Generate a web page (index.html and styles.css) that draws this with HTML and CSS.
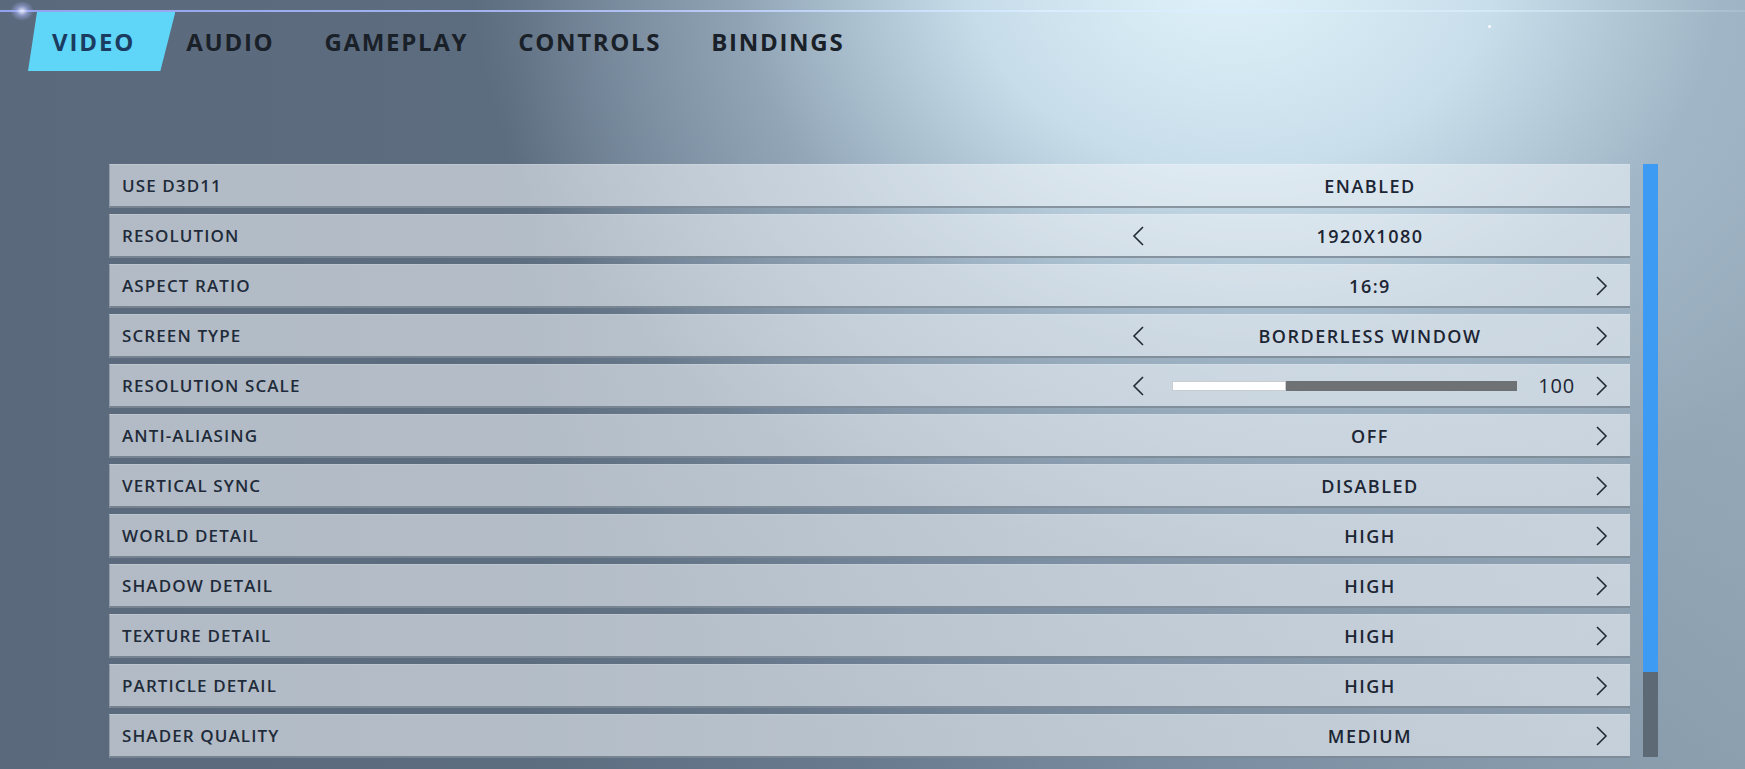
FILE: index.html
```html
<!DOCTYPE html>
<html lang="en">
<head>
<meta charset="utf-8">
<title>Video Settings</title>
<link rel="stylesheet" href="styles.css">
</head>
<body>
<div class="screen">
  <div class="glow-line"><span class="star"></span><span class="dot"></span></div>
  <nav class="tabs">
    <div class="tab active">VIDEO</div>
    <div class="tab">AUDIO</div>
    <div class="tab">GAMEPLAY</div>
    <div class="tab">CONTROLS</div>
    <div class="tab">BINDINGS</div>
  </nav>

  <div class="panel">
    <div class="rows">
      <div class="row"><div class="label">USE D3D11</div><div class="value"><span class="arrow"></span><span class="val">ENABLED</span><span class="arrow"></span></div></div>
      <div class="row"><div class="label">RESOLUTION</div><div class="value"><span class="arrow"><svg viewBox="0 0 12 20"><path d="M11 1 L2 10 L11 19"/></svg></span><span class="val">1920X1080</span><span class="arrow"></span></div></div>
      <div class="row"><div class="label">ASPECT RATIO</div><div class="value"><span class="arrow"></span><span class="val">16:9</span><span class="arrow"><svg viewBox="0 0 12 20"><path d="M1 1 L10 10 L1 19"/></svg></span></div></div>
      <div class="row"><div class="label">SCREEN TYPE</div><div class="value"><span class="arrow"><svg viewBox="0 0 12 20"><path d="M11 1 L2 10 L11 19"/></svg></span><span class="val">BORDERLESS WINDOW</span><span class="arrow"><svg viewBox="0 0 12 20"><path d="M1 1 L10 10 L1 19"/></svg></span></div></div>
      <div class="row"><div class="label">RESOLUTION SCALE</div><div class="value"><span class="arrow"><svg viewBox="0 0 12 20"><path d="M11 1 L2 10 L11 19"/></svg></span><span class="slider-wrap"><span class="slider"><span class="fill" style="width:33%"></span></span><span class="num">100</span></span><span class="arrow"><svg viewBox="0 0 12 20"><path d="M1 1 L10 10 L1 19"/></svg></span></div></div>
      <div class="row"><div class="label">ANTI-ALIASING</div><div class="value"><span class="arrow"></span><span class="val">OFF</span><span class="arrow"><svg viewBox="0 0 12 20"><path d="M1 1 L10 10 L1 19"/></svg></span></div></div>
      <div class="row"><div class="label">VERTICAL SYNC</div><div class="value"><span class="arrow"></span><span class="val">DISABLED</span><span class="arrow"><svg viewBox="0 0 12 20"><path d="M1 1 L10 10 L1 19"/></svg></span></div></div>
      <div class="row"><div class="label">WORLD DETAIL</div><div class="value"><span class="arrow"></span><span class="val">HIGH</span><span class="arrow"><svg viewBox="0 0 12 20"><path d="M1 1 L10 10 L1 19"/></svg></span></div></div>
      <div class="row"><div class="label">SHADOW DETAIL</div><div class="value"><span class="arrow"></span><span class="val">HIGH</span><span class="arrow"><svg viewBox="0 0 12 20"><path d="M1 1 L10 10 L1 19"/></svg></span></div></div>
      <div class="row"><div class="label">TEXTURE DETAIL</div><div class="value"><span class="arrow"></span><span class="val">HIGH</span><span class="arrow"><svg viewBox="0 0 12 20"><path d="M1 1 L10 10 L1 19"/></svg></span></div></div>
      <div class="row"><div class="label">PARTICLE DETAIL</div><div class="value"><span class="arrow"></span><span class="val">HIGH</span><span class="arrow"><svg viewBox="0 0 12 20"><path d="M1 1 L10 10 L1 19"/></svg></span></div></div>
      <div class="row"><div class="label">SHADER QUALITY</div><div class="value"><span class="arrow"></span><span class="val">MEDIUM</span><span class="arrow"><svg viewBox="0 0 12 20"><path d="M1 1 L10 10 L1 19"/></svg></span></div></div>
    </div>
    <div class="scrollbar"><div class="thumb"></div></div>
  </div>
</div>
</body>
</html>
```

FILE: styles.css
```css
html, body {
  margin: 0;
  padding: 0;
  width: 1745px;
  height: 769px;
  overflow: hidden;
}

body {
  font-family: "Open Sans", "Liberation Sans", sans-serif;
  color: #1d2735;
  background:
    radial-gradient(ellipse 760px 600px at 1230px -40px, rgba(226,244,252,1) 0%, rgba(206,228,240,0.9) 35%, rgba(170,192,208,0.55) 65%, rgba(140,160,178,0) 100%),
    radial-gradient(ellipse 900px 700px at 1400px 200px, rgba(170,192,208,0.6) 0%, rgba(150,170,186,0) 100%),
    linear-gradient(90deg, #5a697b 0%, #5d6d80 30%, #708296 60%, #8a9dad 100%);
}

.screen {
  width: 1745px;
  height: 769px;
  display: flex;
  flex-direction: column;
}

.glow-line {
  position: relative;
  margin-top: 10px;
  height: 2px;
  background: linear-gradient(90deg, rgba(150,165,245,0.95) 0%, rgba(170,185,245,0.95) 30%, rgba(215,238,255,0.95) 60%, rgba(220,240,255,0.6) 85%, rgba(220,240,255,0.15) 100%);
}

.glow-line .star {
  position: absolute;
  left: 10px;
  top: -9px;
  width: 24px;
  height: 20px;
  background: radial-gradient(ellipse at center, rgba(235,240,255,0.95) 0%, rgba(170,180,250,0.5) 35%, rgba(170,180,250,0) 70%);
}

.glow-line .dot {
  position: absolute;
  left: 1488px;
  top: 15px;
  width: 3px;
  height: 3px;
  border-radius: 50%;
  background: rgba(255,255,255,0.9);
}

.tabs {
  display: flex;
  align-items: center;
  height: 59px;
  padding-left: 28px;
}

.tab {
  height: 59px;
  display: flex;
  align-items: center;
  padding: 0 25px 0 25px;
  font-size: 24px;
  font-weight: 700;
  letter-spacing: 1.7px;
  color: #1a2028;
}

.tab.active {
  padding: 0 40px 0 24px;
  margin-right: -14px;
  letter-spacing: 1.9px;
  background: #5fd5f7;
  color: #1b3b60;
  clip-path: polygon(9px 0, 100% 0, calc(100% - 15px) 100%, 0 100%);
}

.panel {
  display: flex;
  margin-top: 93px;
  margin-left: 109px;
  gap: 13px;
}

.rows {
  width: 1521px;
  display: flex;
  flex-direction: column;
  gap: 6px;
}

.row {
  height: 41px;
  display: flex;
  align-items: center;
  justify-content: space-between;
  background: rgba(236,241,246,0.6);
  border-left: 1px solid rgba(80,95,110,0.35);
  border-top: 1px solid rgba(255,255,255,0.15);
  border-bottom: 2px solid rgba(70,85,100,0.55);
  box-sizing: content-box;
}

.label {
  padding-left: 12px;
  font-size: 17px;
  font-weight: 600;
  letter-spacing: 1.1px;
  color: #1f2b3a;
}

.value {
  width: 476px;
  padding: 0 10px;
  margin-right: 12px;
  display: flex;
  align-items: center;
  justify-content: space-between;
}

.val {
  flex: 1;
  text-align: center;
  font-size: 18px;
  font-weight: 600;
  letter-spacing: 1.5px;
  color: #1c2533;
}

.arrow {
  width: 12px;
  height: 20px;
  display: flex;
}

.arrow svg {
  width: 12px;
  height: 20px;
  fill: none;
  stroke: #222a33;
  stroke-width: 1.6;
}

.slider-wrap {
  flex: 1;
  display: flex;
  align-items: center;
  padding: 0 21px 0 28px;
}

.slider {
  width: 345px;
  height: 10px;
  background: #6f7275;
  display: flex;
}

.slider .fill {
  height: 100%;
  background: #ffffff;
  box-shadow: inset 0 0 0 1px #c9cdd2;
}

.num {
  margin-left: auto;
  font-size: 20px;
  font-weight: 500;
  letter-spacing: 0.8px;
  color: #1c2533;
}

.scrollbar {
  width: 15px;
  height: 593px;
  background: #5d6a76;
}

.thumb {
  height: 508px;
  background: #3d9bf4;
}
```
